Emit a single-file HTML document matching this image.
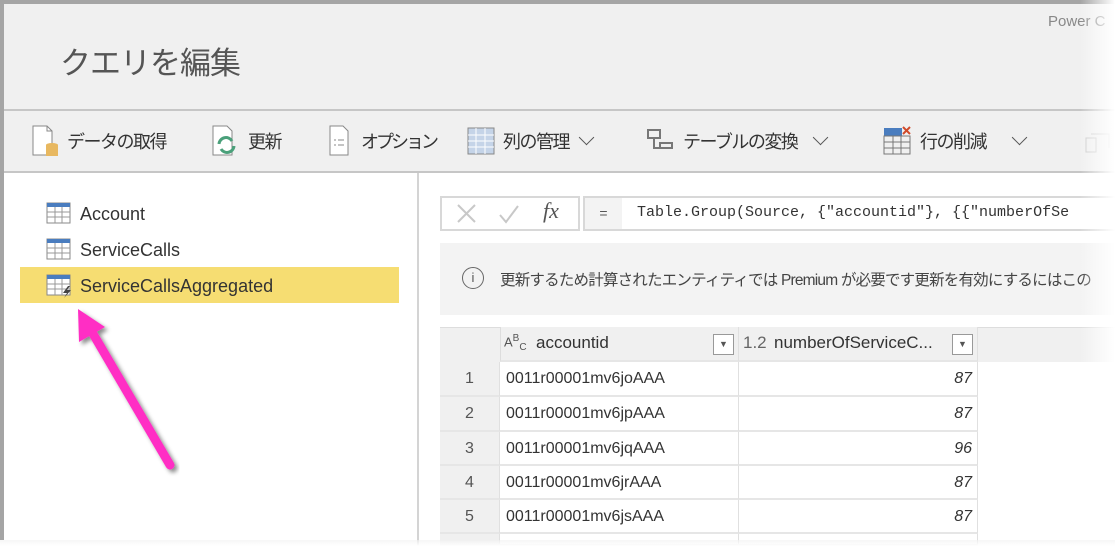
<!DOCTYPE html>
<html><head><meta charset="utf-8"><style>
*{margin:0;padding:0;box-sizing:border-box}
body{width:1115px;height:546px;overflow:hidden;background:#fff;font-family:"Liberation Sans","Noto Sans CJK JP",sans-serif;position:relative;color:#333}
.a{position:absolute}
.tb{font-size:18px;color:#333;top:128px;white-space:nowrap;letter-spacing:-1.5px}
.cv{display:inline-block;width:11px;height:11px;border-right:1.5px solid #555;border-bottom:1.5px solid #555;transform:rotate(45deg);margin-left:12px;position:relative;top:-5px}
.cell{position:absolute;border-right:1px solid #e0e0e0;border-bottom:2px solid #e6e6e6;font-size:16px;color:#333;line-height:34px;white-space:nowrap}
.rn{background:#f0f0f0;text-align:center;color:#555}
</style></head><body>
<div class="a" style="left:0;top:0;width:1115px;height:4px;background:#a5a5a5"></div>
<div class="a" style="left:0;top:0;width:4px;height:540px;background:#a5a5a5"></div>
<div class="a" style="left:4px;top:4px;width:1111px;height:106px;background:#f0f0f0"></div>
<div class="a" style="left:60px;top:38px;font-size:31px;color:#555;letter-spacing:-1px">クエリを編集</div>
<div class="a" style="left:1048px;top:13px;font-size:15px;color:#888">Power C</div>
<div class="a" style="left:4px;top:109px;width:1111px;height:2px;background:#c6c6c6"></div>
<div class="a" style="left:4px;top:111px;width:1111px;height:60px;background:#f0f0f0"></div>
<div class="a" style="left:4px;top:171px;width:1111px;height:2px;background:#c6c6c6"></div>
<svg class="a" style="left:30px;top:124px" width="30" height="34"><path d="M3 2h14l5 5v24H3z" fill="#fff" stroke="#888"/><path d="M17 2v5h5" fill="none" stroke="#888"/><ellipse cx="22" cy="21" rx="6" ry="2" fill="#e8b860"/><rect x="16" y="21" width="12" height="11" fill="#e8b860"/></svg>
<div class="a tb" style="left:67px">データの取得</div>
<svg class="a" style="left:210px;top:124px" width="30" height="34"><path d="M3 2h14l5 5v24H3z" fill="#fff" stroke="#888"/><path d="M9 20a7 7 0 0 1 13-3M24 22a7 7 0 0 1-13 3" fill="none" stroke="#4aa07a" stroke-width="3"/></svg>
<div class="a tb" style="left:248px">更新</div>
<svg class="a" style="left:328px;top:124px" width="24" height="34"><path d="M2 2h13l5 5v24H2z" fill="#fff" stroke="#888"/><path d="M6 16h2M10 16h6M6 21h2M10 21h6" stroke="#888"/></svg>
<div class="a tb" style="left:361px;letter-spacing:-3px">オプション</div>
<svg class="a" style="left:467px;top:127px" width="28" height="28"><rect x="1" y="1" width="26" height="26" fill="#c5d4e8" stroke="#888"/><path d="M9 1v26M18 1v26M1 8h26M1 14h26M1 20h26" stroke="#fff"/></svg>
<div class="a tb" style="left:503px">列の管理<span class="cv"></span></div>
<svg class="a" style="left:646px;top:128px" width="30" height="26"><path d="M2 2h12v8H2zM8 10v10h18v-5H14v5" fill="none" stroke="#777" stroke-width="2"/></svg>
<div class="a tb" style="left:683px">テーブルの変換<span class="cv" style="margin-left:18px"></span></div>
<svg class="a" style="left:883px;top:126px" width="30" height="30"><rect x="1" y="2" width="18" height="8" fill="#4a7dbf"/><path d="M1 10h26v18H1zM10 10v18M18 10v18M1 16h26M1 22h26" fill="none" stroke="#777"/><path d="M20 1l7 7M27 1l-7 7" stroke="#d04a2a" stroke-width="2"/></svg>
<div class="a tb" style="left:920px">行の削減<span class="cv" style="margin-left:28px"></span></div>
<svg class="a" style="left:1085px;top:132px" width="30" height="24"><path d="M1 6h10v14H1zM6 2h18v14" fill="none" stroke="#ccc"/></svg>
<div class="a" style="left:417px;top:173px;width:2px;height:373px;background:#d4d4d4"></div>
<svg class="a" style="left:46px;top:202px" width="26" height="22"><rect x="1" y="1" width="23" height="20" fill="#fff" stroke="#888"/><rect x="1" y="1" width="23" height="4" fill="#4a7dbf"/><path d="M9 5v16M16 5v16M1 10h23M1 15h23" stroke="#999"/></svg>
<div class="a" style="left:80px;top:204px;font-size:18px">Account</div>
<svg class="a" style="left:46px;top:238px" width="26" height="22"><rect x="1" y="1" width="23" height="20" fill="#fff" stroke="#888"/><rect x="1" y="1" width="23" height="4" fill="#4a7dbf"/><path d="M9 5v16M16 5v16M1 10h23M1 15h23" stroke="#999"/></svg>
<div class="a" style="left:80px;top:240px;font-size:18px">ServiceCalls</div>
<div class="a" style="left:20px;top:267px;width:379px;height:36px;background:#f6dd72"></div>
<svg class="a" style="left:46px;top:274px" width="28" height="24"><rect x="1" y="1" width="23" height="20" fill="#fff" stroke="#888"/><rect x="1" y="1" width="23" height="4" fill="#4a7dbf"/><path d="M9 5v16M16 5v16M1 10h23M1 15h23" stroke="#999"/><path d="M22 12l-5 7h4l-3 5 7-8h-4l3-4z" fill="#444"/></svg>
<div class="a" style="left:80px;top:276px;font-size:18px">ServiceCallsAggregated</div>
<svg class="a" style="left:60px;top:300px" width="140" height="180">
<defs><filter id="s"><feDropShadow dx="3" dy="3" stdDeviation="2" flood-color="#000" flood-opacity=".45"/></filter></defs>
<g filter="url(#s)"><path d="M110 165L32 32" stroke="#ff2fc4" stroke-width="9" stroke-linecap="round"/><path d="M18 9L19 42L45 27z" fill="#ff2fc4"/></g></svg>
<div class="a" style="left:440px;top:196px;width:140px;height:35px;border:2px solid #d8d8d8;background:#fff"></div>
<svg class="a" style="left:456px;top:203px" width="70" height="22"><path d="M2 2l17 17M19 2L2 19" stroke="#c8c8c8" stroke-width="2"/><path d="M44 12l6 7 12-16" fill="none" stroke="#c8c8c8" stroke-width="2"/></svg>
<div class="a" style="left:543px;top:198px;font-size:22px;color:#555;font-family:'Liberation Serif',serif;font-style:italic">fx</div>
<div class="a" style="left:583px;top:196px;width:532px;height:35px;border:2px solid #d8d8d8;border-right:none;background:#fff"></div>
<div class="a" style="left:585px;top:198px;width:37px;height:31px;background:#f3f3f3;text-align:center;line-height:31px;font-size:14px;color:#555">=</div>
<div class="a" style="left:637px;top:204px;font-size:15px;font-family:'Liberation Mono',monospace;color:#333;white-space:nowrap;width:478px;overflow:hidden">Table.Group(Source, {"accountid"}, {{"numberOfSe</div>
<div class="a" style="left:440px;top:243px;width:675px;height:72px;background:#f3f3f3"></div>
<div class="a" style="left:462px;top:267px;width:22px;height:22px;border:1.5px solid #666;border-radius:50%;font-size:13px;text-align:center;line-height:19px;color:#555">i</div>
<div class="a" style="left:500px;top:268px;font-size:15.5px;color:#444;white-space:nowrap;letter-spacing:-0.8px">更新するため計算されたエンティティでは Premium が必要です更新を有効にするにはこの</div>
<div class="a" style="left:440px;top:327px;width:675px;height:35px;background:#f0f0f0;border-top:1px solid #ddd"></div>
<div class="cell" style="left:500px;top:327px;width:239px;height:35px;background:#f0f0f0;border-left:1px solid #ddd"></div>
<div class="cell" style="left:739px;top:327px;width:239px;height:35px;background:#f0f0f0"></div>
<div class="a" style="left:504px;top:333px;font-size:13px;color:#555">A<sup style="font-size:10px">B</sup><sub style="font-size:10px">C</sub></div>
<div class="a" style="left:536px;top:333px;font-size:17px;color:#333">accountid</div>
<div class="a" style="left:713px;top:334px;width:21px;height:21px;border:1px solid #999;background:#fff;font-size:9px;text-align:center;line-height:19px;color:#555">▼</div>
<div class="a" style="left:743px;top:333px;font-size:17px;color:#666">1.2</div>
<div class="a" style="left:774px;top:333px;font-size:17px;color:#333">numberOfServiceC...</div>
<div class="a" style="left:952px;top:334px;width:21px;height:21px;border:1px solid #999;background:#fff;font-size:9px;text-align:center;line-height:19px;color:#555">▼</div>

<div class="cell rn" style="left:440px;top:362px;width:60px;height:35px">1</div>
<div class="cell" style="left:500px;top:362px;width:239px;height:35px;padding-left:6px">0011r00001mv6joAAA</div>
<div class="cell" style="left:739px;top:362px;width:239px;height:35px;text-align:right;padding-right:5px;font-style:italic">87</div>
<div class="cell rn" style="left:440px;top:397px;width:60px;height:35px">2</div>
<div class="cell" style="left:500px;top:397px;width:239px;height:35px;padding-left:6px">0011r00001mv6jpAAA</div>
<div class="cell" style="left:739px;top:397px;width:239px;height:35px;text-align:right;padding-right:5px;font-style:italic">87</div>
<div class="cell rn" style="left:440px;top:432px;width:60px;height:34px">3</div>
<div class="cell" style="left:500px;top:432px;width:239px;height:34px;padding-left:6px">0011r00001mv6jqAAA</div>
<div class="cell" style="left:739px;top:432px;width:239px;height:34px;text-align:right;padding-right:5px;font-style:italic">96</div>
<div class="cell rn" style="left:440px;top:466px;width:60px;height:34px">4</div>
<div class="cell" style="left:500px;top:466px;width:239px;height:34px;padding-left:6px">0011r00001mv6jrAAA</div>
<div class="cell" style="left:739px;top:466px;width:239px;height:34px;text-align:right;padding-right:5px;font-style:italic">87</div>
<div class="cell rn" style="left:440px;top:500px;width:60px;height:34px">5</div>
<div class="cell" style="left:500px;top:500px;width:239px;height:34px;padding-left:6px">0011r00001mv6jsAAA</div>
<div class="cell" style="left:739px;top:500px;width:239px;height:34px;text-align:right;padding-right:5px;font-style:italic">87</div>
<div class="cell rn" style="left:440px;top:534px;width:60px;height:12px"></div>
<div class="cell" style="left:500px;top:534px;width:239px;height:12px"></div>
<div class="cell" style="left:739px;top:534px;width:239px;height:12px"></div>
<div class="a" style="left:1080px;top:0;width:35px;height:546px;background:linear-gradient(to right,rgba(255,255,255,0),#fff)"></div>
<div class="a" style="left:0;top:540px;width:1115px;height:6px;background:linear-gradient(to bottom,rgba(240,240,240,.6),#fff)"></div>
</body></html>
